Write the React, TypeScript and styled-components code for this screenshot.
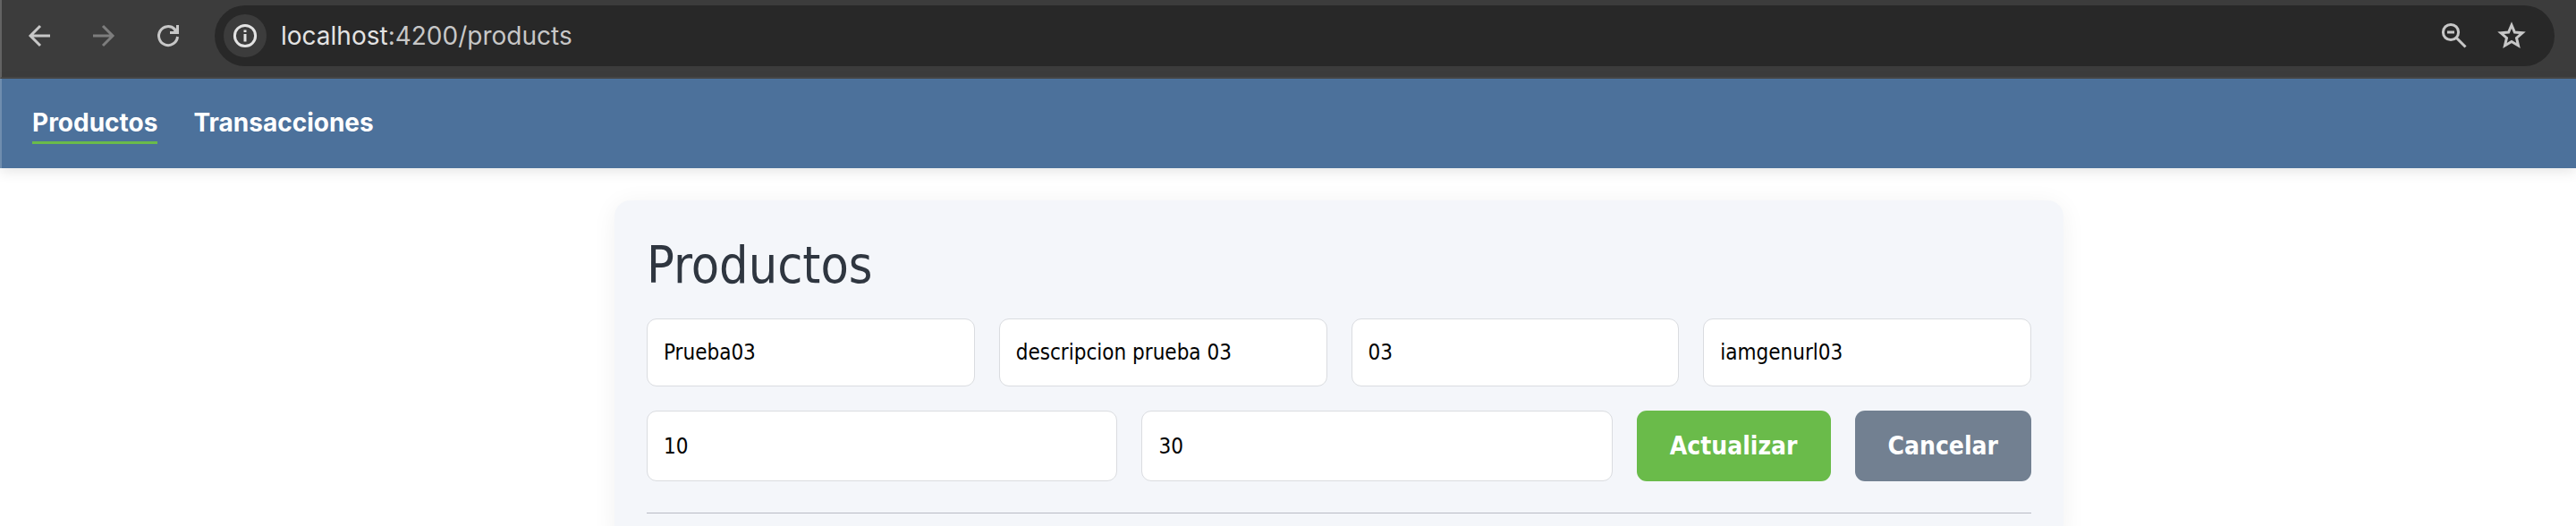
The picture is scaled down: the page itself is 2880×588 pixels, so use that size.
import React from "react";
import styled, { createGlobalStyle } from "styled-components";

const humanist = `Tahoma, "DejaVu Sans Condensed", "Noto Sans", sans-serif`;
const grotesk = `Inter, "Liberation Sans", sans-serif`;

const GlobalStyle = createGlobalStyle`
  *, *::before, *::after { box-sizing: border-box; }
  body { margin: 0; background: #ffffff; font-family: ${humanist}; }
`;

const Window = styled.div`
  display: flex;
  flex-direction: column;
  height: 100vh;
  overflow: hidden;
`;

const Toolbar = styled.header`
  display: flex;
  flex: none;
  align-items: center;
  height: 88px;
  padding: 6px 24px 12px 18px;
  background: #3c3c3c;
  border-left: 2px solid rgba(255, 255, 255, 0.2);
  border-bottom: 2px solid #474747;
`;

const ToolButtons = styled.div`
  display: flex;
  gap: 24px;
  margin-right: 28px;
`;

const ToolButton = styled.button<{ $muted?: boolean }>`
  display: grid;
  place-items: center;
  flex: none;
  width: 48px;
  height: 48px;
  padding: 0;
  border: 0;
  background: none;
  color: ${(p) => (p.$muted ? "#7d7d7d" : "#c7c7c7")};
`;

const AddressBar = styled.div`
  display: flex;
  align-items: center;
  flex: 1;
  min-width: 0;
  height: 68px;
  padding: 0 24px 0 10px;
  border-radius: 34px;
  background: #282828;
`;

const SiteInfo = styled.button`
  display: grid;
  place-items: center;
  flex: none;
  width: 48px;
  height: 48px;
  padding: 0;
  border: 0;
  border-radius: 50%;
  background: #3c3c3c;
  color: #e3e3e3;
`;

const Url = styled.div`
  flex: 1;
  padding-left: 16px;
  font: 400 28px/36px ${grotesk};
  color: #c7c7c7;
`;

const Host = styled.span`
  color: #e3e3e3;
`;

const AddressActions = styled.div`
  display: flex;
  gap: 16px;
`;

const Nav = styled.nav`
  display: flex;
  flex: none;
  align-items: center;
  gap: 40px;
  height: 100px;
  padding: 0 36px 0 34px;
  background: #4c719b;
  border-left: 2px solid rgba(255, 255, 255, 0.2);
  box-shadow: 0 4px 14px rgba(0, 0, 0, 0.1);
`;

const NavLink = styled.a<{ $active?: boolean }>`
  padding: 5px 0 4px;
  border-bottom: 3px solid ${(p) => (p.$active ? "#6abb4a" : "transparent")};
  font: 700 28px/34px ${grotesk};
  color: #ffffff;
  text-decoration: none;
`;

const Main = styled.main`
  flex: none;
  padding: 36px 0 36px 114px;
`;

const Card = styled.section`
  max-width: 1620px;
  margin: 0 auto;
  padding: 36px;
  border-radius: 18px;
  background: #f4f6fa;
  box-shadow: 0 4px 28px rgba(0, 0, 0, 0.06);
`;

const Title = styled.h1`
  margin: 0 0 24px;
  font-size: 57px;
  line-height: 72px;
  font-weight: 400;
  color: #2f3640;
`;

const Form = styled.form`
  display: grid;
  gap: 27px;
`;

const FormRow = styled.div`
  display: flex;
  gap: 27px;
`;

const Field = styled.input`
  flex: 1;
  min-width: 0;
  padding: 21px 18px;
  border: 1px solid #dadce0;
  border-radius: 11px;
  background: #ffffff;
  font: 400 24px/32px ${humanist};
  color: #000000;
`;

const Button = styled.button<{ $tone: "primary" | "neutral" }>`
  padding: 22px 37px;
  border: 0;
  border-radius: 11px;
  background: ${(p) => (p.$tone === "primary" ? "#6abb4a" : "#728091")};
  font: 700 28px/35px ${humanist};
  color: #ffffff;
`;

const Divider = styled.hr`
  margin: 35px 0 0;
  border: 0;
  border-top: 1px solid #b9bbc4;
`;

const details = [
  { label: "Nombre", value: "Prueba03" },
  { label: "Descripción", value: "descripcion prueba 03" },
  { label: "Categoría", value: "03" },
  { label: "Imagen", value: "iamgenurl03" },
];

const amounts = [
  { label: "Precio", value: "10" },
  { label: "Stock", value: "30" },
];

const stroke = { fill: "none", stroke: "currentColor", strokeWidth: 3 };

export default function App() {
  return (
    <Window>
      <GlobalStyle />
      <Toolbar>
        <ToolButtons>
          <ToolButton aria-label="Back">
            <svg width="32" height="32" viewBox="0 0 32 32" {...stroke}>
              <path d="M28 16H6M17 5L6 16l11 11" />
            </svg>
          </ToolButton>
          <ToolButton aria-label="Forward" $muted>
            <svg width="32" height="32" viewBox="0 0 32 32" {...stroke}>
              <path d="M4 16h22M15 5l11 11-11 11" />
            </svg>
          </ToolButton>
          <ToolButton aria-label="Reload">
            <svg width="32" height="32" viewBox="0 0 32 32" {...stroke}>
              <path d="M26.5 17A10.5 10.5 0 1 1 23.400 8.600" />
              <path d="M28 4v10H18v-3h4.500l-1-2L25 7.500V4z" fill="currentColor" stroke="none" />
            </svg>
          </ToolButton>
        </ToolButtons>
        <AddressBar>
          <SiteInfo aria-label="Site information">
            <svg width="32" height="32" viewBox="0 0 32 32" {...stroke}>
              <circle cx="16" cy="16" r="11.6" />
              <path d="M16 14v8.500M16 9.500v2.500" />
            </svg>
          </SiteInfo>
          <Url>
            <Host>localhost</Host>:4200/products
          </Url>
          <AddressActions>
            <ToolButton aria-label="Zoom out">
              <svg width="32" height="32" viewBox="0 0 32 32" {...stroke}>
                <circle cx="12" cy="12" r="8.6" />
                <path d="M8 12h8M18 18l10.5 10.5" />
              </svg>
            </ToolButton>
            <ToolButton aria-label="Bookmark">
              <svg width="32" height="32" viewBox="0 0 32 32" {...stroke}>
                <path d="M16 4l3.4 8 8.700.75-6.600 5.700 2 8.500L16 22.500l-7.500 4.450 2-8.500-6.600-5.700 8.700-.75z" />
              </svg>
            </ToolButton>
          </AddressActions>
        </AddressBar>
      </Toolbar>
      <Nav>
        <NavLink href="#productos" $active aria-current="page">
          Productos
        </NavLink>
        <NavLink href="#transacciones">Transacciones</NavLink>
      </Nav>
      <Main>
        <Card>
          <Title>Productos</Title>
          <Form onSubmit={(e) => e.preventDefault()}>
            <FormRow>
              {details.map((f) => (
                <Field key={f.label} aria-label={f.label} defaultValue={f.value} />
              ))}
            </FormRow>
            <FormRow>
              {amounts.map((f) => (
                <Field key={f.label} aria-label={f.label} defaultValue={f.value} />
              ))}
              <Button type="submit" $tone="primary">
                Actualizar
              </Button>
              <Button type="button" $tone="neutral">
                Cancelar
              </Button>
            </FormRow>
          </Form>
          <Divider />
        </Card>
      </Main>
    </Window>
  );
}
